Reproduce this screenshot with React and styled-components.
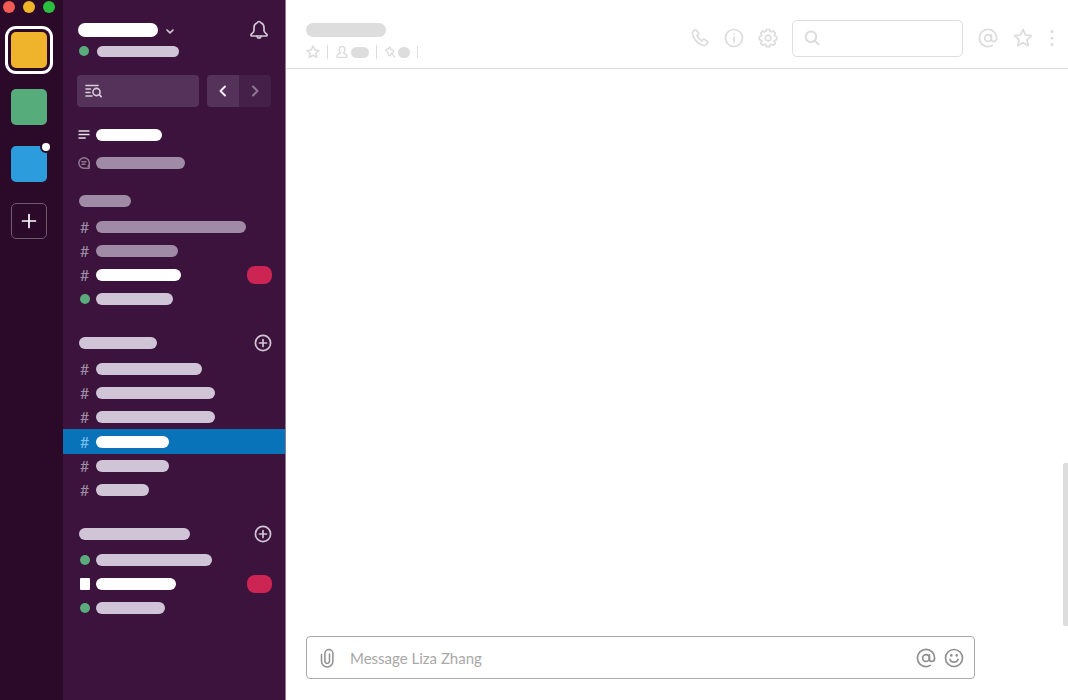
import React from 'react';
import styled, { createGlobalStyle, css } from 'styled-components';

const GlobalStyle = createGlobalStyle`
  *, *::before, *::after {
    box-sizing: border-box;
  }
  body {
    margin: 0;
    background: #fff;
    font-family: Lato, 'Liberation Sans', sans-serif;
    font-size: 16px;
  }
  button {
    padding: 0;
    border: 0;
    background: none;
    color: inherit;
    font: inherit;
    cursor: pointer;
  }
  svg {
    display: block;
    flex: none;
  }
`;

const tones = { strong: '#ffffff', soft: '#d0c5d6', dim: '#9f8ba5', grey: '#dddddd' };

const Layout = styled.div`
  display: flex;
  min-height: 100vh;
`;

const Icon = styled.svg.attrs({ 'aria-hidden': true })`
  fill: none;
  stroke: currentColor;
  stroke-width: ${(p) => p.$weight || 1.7};
  stroke-linecap: round;
  stroke-linejoin: round;
`;

const Bar = styled.span`
  flex: none;
  width: ${(p) => p.$width}px;
  height: ${(p) => p.$height || 12}px;
  border-radius: 7px;
  background: ${(p) => tones[p.$tone || 'soft']};
`;

/* workspace rail */

const Rail = styled.nav`
  flex: none;
  width: 63px;
  background: #2b0928;
`;

const WindowControls = styled.div`
  display: flex;
  gap: 8px;
  padding: 1px 0 0 3px;
`;

const WindowButton = styled.button`
  width: 12px;
  height: 12px;
  border-radius: 50%;
  && {
    background: ${(p) => p.$color};
  }
`;

const Workspaces = styled.div`
  display: flex;
  flex-direction: column;
  gap: 21px;
  padding: 19px 0 0 11px;
`;

const Workspace = styled.button`
  position: relative;
  width: 36px;
  height: 36px;
  border-radius: 5px;
  && {
    background: ${(p) => p.$color};
  }
  ${(p) =>
    p.$active &&
    css`
      box-shadow: 0 0 0 3px #2b0928, 0 0 0 6px #fff;
    `}
`;

const Unread = styled.span`
  position: absolute;
  top: -5px;
  right: -5px;
  width: 12px;
  height: 12px;
  border: 2px solid #2b0928;
  border-radius: 50%;
  background: #fff;
`;

const AddWorkspace = styled.button`
  display: grid;
  place-items: center;
  width: 36px;
  height: 36px;
  border-radius: 5px;
  && {
    border: 1px solid #6f5a6e;
    color: #fff;
  }
`;

/* channel sidebar */

const Sidebar = styled.aside`
  flex: none;
  width: 223px;
  padding-top: 20px;
  border-right: 1px solid #8f7b93;
  background: #3b133c;
`;

const TeamHeader = styled.header`
  display: flex;
  align-items: center;
  height: 20px;
  padding: 0 16px 0 15px;
  color: #d0c5d6;
`;

const TeamMenu = styled.button`
  display: flex;
  flex: 1;
  align-items: center;
  gap: 7px;
`;

const Status = styled.div`
  display: flex;
  align-items: center;
  gap: 8px;
  height: 12px;
  margin-top: 5px;
  padding-left: 16px;
`;

const Dot = styled.span`
  width: 10px;
  height: 10px;
  border-radius: 50%;
  background: #5aac7c;
`;

const Square = styled.span`
  width: 10px;
  height: 12px;
  border-radius: 1px;
  background: #fff;
`;

const Tools = styled.div`
  display: flex;
  gap: 8px;
  margin: 18px 14px 0;
`;

const JumpTo = styled.button`
  display: flex;
  flex: 1;
  align-items: center;
  height: 32px;
  border-radius: 4px;
  && {
    padding-left: 8px;
    background: #553259;
    color: #d8cedb;
  }
`;

const History = styled.div`
  display: flex;
  width: 64px;
  height: 32px;
  overflow: hidden;
  border-radius: 4px;
`;

const HistoryButton = styled.button`
  display: grid;
  flex: 1;
  place-items: center;
  && {
    background: ${(p) => (p.disabled ? '#452149' : '#553259')};
    color: ${(p) => (p.disabled ? '#8d7791' : '#f3eef4')};
  }
`;

const QuickLinks = styled.div`
  margin: 14px 0 12px;
`;

const QuickLink = styled.a`
  display: flex;
  align-items: center;
  gap: 6px;
  height: 28px;
  padding-left: 15px;
  color: ${(p) => (p.$dim ? '#8d7791' : '#e6dfe8')};
`;

const Section = styled.section`
  margin-bottom: 20px;
`;

const SectionHeader = styled.div`
  display: flex;
  align-items: center;
  justify-content: space-between;
  height: 24px;
  margin-bottom: 2px;
  padding: 0 13px 0 16px;
  color: #d0c5d6;
`;

const Row = styled.a`
  display: flex;
  align-items: center;
  height: ${(p) => (p.$active ? 25 : 24)}px;
  padding: 0 13px 0 17px;
  background: ${(p) => (p.$active ? '#0973ba' : 'transparent')};
  color: ${(p) => (p.$active ? '#7cc1ee' : '#a08ea6')};
  line-height: 24px;
  text-decoration: none;
`;

const Mark = styled.span`
  display: flex;
  flex: none;
  width: 16px;
`;

const Badge = styled.span`
  width: 25px;
  height: 18px;
  margin-left: auto;
  border-radius: 8px;
  background: #cd2553;
`;

/* conversation */

const Main = styled.main`
  display: flex;
  flex: 1;
  flex-direction: column;
  min-width: 0;
`;

const ChannelHeader = styled.header`
  display: flex;
  align-items: center;
  height: 69px;
  padding: 8px 12px 0 20px;
  border-bottom: 1px solid #dedede;
  color: #dcdcdc;
`;

const ChannelInfo = styled.div`
  flex: 1;
`;

const ChannelName = styled.div`
  display: flex;
  padding-top: 6px;
`;

const ChannelMeta = styled.div`
  display: flex;
  align-items: center;
  height: 14px;
  margin-top: 8px;
`;

const MetaItem = styled.span`
  display: flex;
  align-items: center;
  gap: 3px;
  padding-right: 7px;
  margin-right: 8px;
  border-right: 1px solid #dcdcdc;
`;

const Actions = styled.div`
  display: flex;
  align-items: center;
  gap: 14px;
`;

const SearchBox = styled.label`
  display: flex;
  align-items: center;
  gap: 8px;
  width: 171px;
  height: 37px;
  margin: 0 15px 0 14px;
  padding: 0 11px;
  border: 1px solid #dedede;
  border-radius: 5px;
`;

const Shortcuts = styled.div`
  display: flex;
  align-items: center;
  gap: 15px;
`;

const TextInput = styled.input`
  flex: 1;
  min-width: 0;
  padding: 0;
  border: 0;
  outline: 0;
  background: none;
  color: #555;
  font: inherit;
  &::placeholder {
    color: #a8a8a8;
    opacity: 1;
  }
`;

const Messages = styled.div`
  display: flex;
  flex: 1;
  align-items: flex-end;
  justify-content: flex-end;
`;

const ScrollThumb = styled.div`
  width: 5px;
  height: 163px;
  border-radius: 2px 0 0 2px;
  background: #dddddd;
`;

const Composer = styled.form`
  display: flex;
  align-items: center;
  height: 43px;
  margin: 10px 93px 21px 20px;
  padding: 0 10px 0 12px;
  border: 1px solid #a9a9a9;
  border-radius: 4px;
  color: #8f8f8f;
`;

const ComposerInput = styled(TextInput)`
  margin: 0 12px 0 13px;
  font-size: 15px;
`;

const ComposerTools = styled.div`
  display: flex;
  gap: 8px;
`;

const STAR = 'M10 1.5 12.5 7l6 .7-4.5 4 1.3 6L10 14.6l-5.3 3.1 1.300-6-4.500-4 6-.7z';

const Star = ({ size, weight }) => (
  <Icon width={size} height={size} viewBox="0 0 20 20" $weight={weight}>
    <path d={STAR} />
  </Icon>
);

const At = () => (
  <Icon width="20" height="20" viewBox="0 0 20 20">
    <circle cx="10" cy="10" r="3.4" />
    <path d="M13.4 6.8v4.4c0 1.6 1 2.3 2.2 2.3 1.9 0 3-1.5 3-3.5A8.6 8.6 0 1 0 10 18.6c1.6 0 3-.4 4.3-1.2" />
  </Icon>
);

const PlusCircle = () => (
  <Icon width="18" height="18" viewBox="0 0 18 18">
    <circle cx="9" cy="9" r="7.6" />
    <path d="M9 5.5v7M5.5 9h7" />
  </Icon>
);

const sections = [
  {
    title: 'Starred',
    width: 52,
    tone: 'dim',
    rows: [
      { width: 150, tone: 'dim' },
      { width: 82, tone: 'dim' },
      { width: 85, tone: 'strong', badge: true },
      { width: 77, mark: 'dot' },
    ],
  },
  {
    title: 'Channels',
    width: 78,
    add: true,
    rows: [
      { width: 106 },
      { width: 119 },
      { width: 119 },
      { width: 73, tone: 'strong', active: true },
      { width: 73 },
      { width: 53 },
    ],
  },
  {
    title: 'Direct messages',
    width: 111,
    add: true,
    rows: [
      { width: 116, mark: 'dot' },
      { width: 80, tone: 'strong', mark: 'square', badge: true },
      { width: 69, mark: 'dot' },
    ],
  },
];

const marks = { dot: <Dot />, square: <Square /> };

const WorkspaceRail = () => (
  <Rail aria-label="Workspaces">
    <WindowControls>
      <WindowButton $color="#f15b53" aria-label="Close" />
      <WindowButton $color="#f0b429" aria-label="Minimize" />
      <WindowButton $color="#2bbd3e" aria-label="Maximize" />
    </WindowControls>
    <Workspaces>
      <Workspace $color="#f0b42c" $active aria-label="Workspace 1" />
      <Workspace $color="#56ad7b" aria-label="Workspace 2" />
      <Workspace $color="#2d9cdd" aria-label="Workspace 3">
        <Unread />
      </Workspace>
      <AddWorkspace aria-label="Add workspace">
        <Icon width="16" height="16" viewBox="0 0 16 16">
          <path d="M8 1.5v13M1.5 8h13" />
        </Icon>
      </AddWorkspace>
    </Workspaces>
  </Rail>
);

const ChannelSidebar = () => (
  <Sidebar>
    <TeamHeader>
      <TeamMenu aria-label="Team menu">
        <Bar $width={80} $height={14} $tone="strong" />
        <Icon width="10" height="10" viewBox="0 0 10 10">
          <path d="M2 5 5 7.8 8 5" />
        </Icon>
      </TeamMenu>
      <button aria-label="Notifications">
        <Icon width="20" height="20" viewBox="0 0 20 20">
          <path d="M8.2 2.8a1.9 1.9 0 0 1 3.6 0c2.2.8 3.200 2.600 3.200 4.800v2.900c0 1.600 1.200 2.200 2.700 3.600.8.800.3 1.900-.7 1.900H3c-1 0-1.500-1.100-.7-1.900C3.800 12.700 5 12.100 5 10.500V7.600c0-2.200 1-4 3.200-4.800z" />
          <path d="M8 16.200c.3 1.300 1 1.900 2 1.900s1.700-.6 2-1.900" />
        </Icon>
      </button>
    </TeamHeader>
    <Status>
      <Dot />
      <Bar $width={82} $height={11} />
    </Status>
    <Tools>
      <JumpTo aria-label="Jump to">
        <Icon width="18" height="14" viewBox="0 0 18 14" $weight={1.6}>
          <path d="M1 1.500h12M1 5h4.500M1 8.500h4M1 12h6" />
          <circle cx="11.500" cy="8" r="3.600" />
          <path d="m14.200 10.600 2 2" />
        </Icon>
      </JumpTo>
      <History>
        <HistoryButton aria-label="Back">
          <Icon width="12" height="12" viewBox="0 0 12 12" $weight={2}>
            <path d="M8 1.500 3.500 6 8 10.500" />
          </Icon>
        </HistoryButton>
        <HistoryButton aria-label="Forward" disabled>
          <Icon width="12" height="12" viewBox="0 0 12 12" $weight={2}>
            <path d="M4 1.500 8.500 6 4 10.500" />
          </Icon>
        </HistoryButton>
      </History>
    </Tools>
    <QuickLinks>
      <QuickLink href="#unreads" aria-label="All unreads">
        <Icon width="12" height="12" viewBox="0 0 12 12">
          <path d="M1.200 2h9.600M1.200 5.500h9.600M1.200 9h5.800" />
        </Icon>
        <Bar $width={66} $tone="strong" />
      </QuickLink>
      <QuickLink href="#threads" aria-label="Threads" $dim>
        <Icon width="12" height="12" viewBox="0 0 12 12" $weight={1.5}>
          <path d="M10.200 9.200A5.200 5.200 0 1 0 6 11.200h5.200V6" />
          <path d="M4 4.800h4M4 7.200h3" />
        </Icon>
        <Bar $width={89} $tone="dim" />
      </QuickLink>
    </QuickLinks>
    {sections.map((section) => (
      <Section key={section.title} aria-label={section.title}>
        <SectionHeader>
          <Bar $width={section.width} $tone={section.tone} />
          {section.add && (
            <button aria-label={`Add to ${section.title}`}>
              <PlusCircle />
            </button>
          )}
        </SectionHeader>
        {section.rows.map((row, i) => (
          <Row key={i} href="#channel" $active={row.active}>
            <Mark>{marks[row.mark] || '#'}</Mark>
            <Bar $width={row.width} $tone={row.tone} />
            {row.badge && <Badge />}
          </Row>
        ))}
      </Section>
    ))}
  </Sidebar>
);

const ConversationHeader = () => (
  <ChannelHeader>
    <ChannelInfo>
      <ChannelName>
        <Bar $width={80} $height={14} $tone="grey" />
      </ChannelName>
      <ChannelMeta>
        <MetaItem>
          <Star size={14} weight={2.2} />
        </MetaItem>
        <MetaItem>
          <Icon width="12" height="14" viewBox="1 0 12 14" $weight={1.4}>
            <path d="M7 1.500c-1.700 0-2.800 1.200-2.800 2.900 0 1.500.6 2.800 1.400 3.600-2.300.5-3.600 1.500-3.600 3.500 0 .6.300.9.900.9h8.200c.6 0 .9-.3.9-.9 0-2-1.300-3-3.600-3.500.8-.8 1.400-2.100 1.400-3.600 0-1.700-1.100-2.900-2.800-2.900z" />
          </Icon>
          <Bar $width={18} $height={11} $tone="grey" />
        </MetaItem>
        <MetaItem>
          <Icon width="10" height="12" viewBox="0 0 10 12" $weight={1.3}>
            <path d="M4.600.8 6 3.600l2.800 1-.6 1.800-1.900.7-.8 2.400-1.800.2-.9-3L.7 4.200l.8-1.200 1.900.1zM6.400 7.200l3 3.800" />
          </Icon>
          <Bar $width={12} $height={11} $tone="grey" />
        </MetaItem>
      </ChannelMeta>
    </ChannelInfo>
    <Actions>
      <button aria-label="Call">
        <Icon width="20" height="20" viewBox="0 0 20 20">
          <path d="M3.400 3.100 4.800 2c.6-.4 1.200-.3 1.600.2l2 2.900c.4.500.3 1.100-.2 1.500l-1.300 1c.8 2.100 2.800 4.200 5.100 5.300l1-1.300c.4-.5 1-.6 1.500-.2l2.900 2.100c.6.4.6 1 .2 1.600l-1.100 1.400c-.8.9-2 1.200-3.300.8C8 15.800 4 11.500 2.500 6.200c-.3-1.200.1-2.400.9-3.100z" />
        </Icon>
      </button>
      <button aria-label="Details">
        <Icon width="20" height="20" viewBox="0 0 20 20">
          <circle cx="10" cy="10" r="8.500" />
          <path d="M10 9v5M10 6v.1" />
        </Icon>
      </button>
      <button aria-label="Settings">
        <Icon width="20" height="20" viewBox="0 0 20 20">
          <path d="M8.300 1.500h3.400l.5 2 1 .4 1.900-1 2.200 2.200-1 1.900.4 1 1.900.5v3.200l-1.900.5-.4 1 1 1.900-2.200 2.200-1.900-1-1 .4-.5 1.900H8.300l-.5-1.900-1-.4-1.900 1-2.200-2.200 1-1.900-.4-1-1.900-.5V8.500l1.900-.5.4-1-1-1.900 2.200-2.200 1.900 1 1-.4z" />
          <circle cx="10" cy="10" r="2.800" />
        </Icon>
      </button>
    </Actions>
    <SearchBox>
      <Icon width="16" height="16" viewBox="0 0 16 16" $weight={2}>
        <circle cx="7" cy="6.800" r="5.300" />
        <path d="m11 10.800 3.500 3.400" />
      </Icon>
      <TextInput type="search" aria-label="Search" />
    </SearchBox>
    <Shortcuts>
      <button aria-label="Mentions">
        <At />
      </button>
      <button aria-label="Starred items">
        <Star size={20} />
      </button>
      <button aria-label="More">
        <Icon width="8" height="20" viewBox="0 0 8 20" $weight={3}>
          <path d="M4 3.500v.01M4 10v.01M4 16.500v.01" />
        </Icon>
      </button>
    </Shortcuts>
  </ChannelHeader>
);

const MessageComposer = () => (
  <Composer onSubmit={(e) => e.preventDefault()}>
    <button type="button" aria-label="Attach file">
      <Icon width="18" height="20" viewBox="0 0 18 20" $weight={1.5}>
        <path d="M2.500 6.500v6.700a5.700 5.700 0 0 0 11.400 0V5.500a4 4 0 0 0-8 0v7.600a2.300 2.300 0 0 0 4.600 0V6" />
      </Icon>
    </button>
    <ComposerInput aria-label="Message" placeholder="Message Liza Zhang" />
    <ComposerTools>
      <button type="button" aria-label="Mention someone">
        <At />
      </button>
      <button type="button" aria-label="Emoji">
        <Icon width="20" height="20" viewBox="0 0 20 20">
          <circle cx="10" cy="10" r="8.500" />
          <path d="M6 11.500c.7 1.700 2.200 2.700 4 2.700s3.300-1 4-2.700" />
          <path d="M7.300 7.300v.2M12.700 7.300v.2" strokeWidth="2.500" />
        </Icon>
      </button>
    </ComposerTools>
  </Composer>
);

const App = () => (
  <Layout>
    <GlobalStyle />
    <WorkspaceRail />
    <ChannelSidebar />
    <Main>
      <ConversationHeader />
      <Messages>
        <ScrollThumb />
      </Messages>
      <MessageComposer />
    </Main>
  </Layout>
);

export default App;
